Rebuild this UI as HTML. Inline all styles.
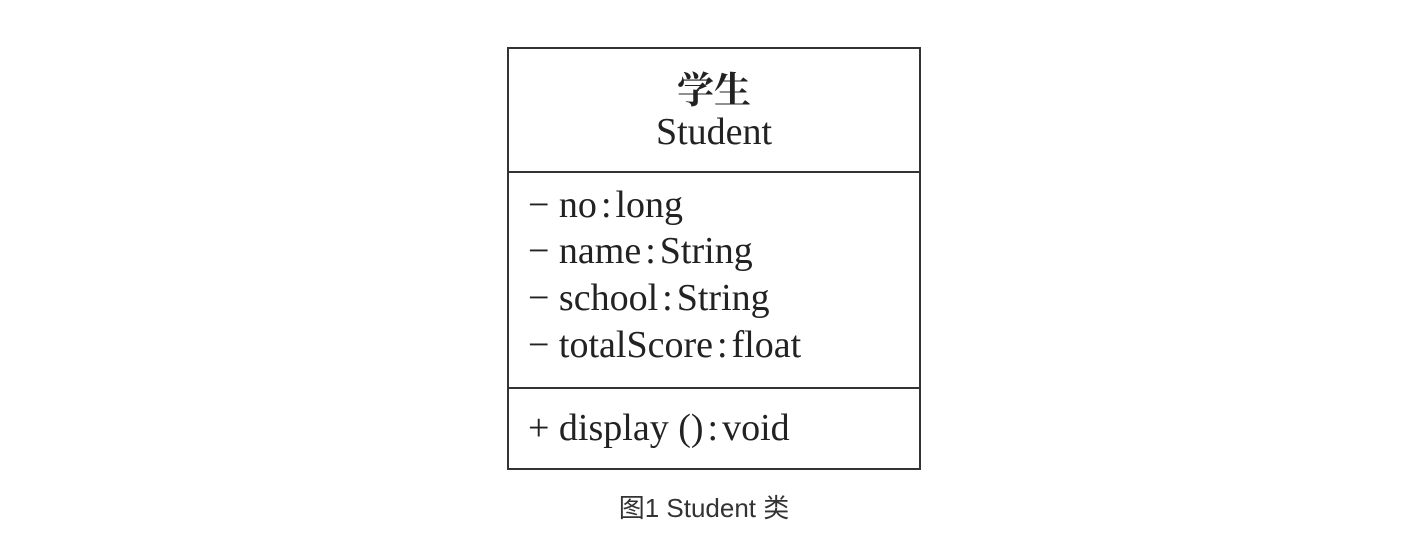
<!DOCTYPE html>
<html><head><meta charset="utf-8"><style>
html,body{margin:0;padding:0;background:#fff;width:1408px;height:550px;overflow:hidden;position:relative}
.box{position:absolute;left:507px;top:47px;width:410px;height:419px;border:2px solid #333;box-sizing:content-box}
.hl{position:absolute;left:507px;width:414px;height:2px;background:#333}
.t{position:absolute;font-family:"Liberation Serif","Noto Serif CJK SC",serif;color:#222;font-size:38px;line-height:40px;white-space:pre}
.c{margin:0 4px}
.cap{position:absolute;left:0;width:1408px;text-align:center;top:492px;font-family:"Liberation Sans","Noto Sans CJK SC",sans-serif;font-size:26px;color:#333;line-height:32px}
</style></head><body>
<div class="box"></div>
<div class="hl" style="top:171px"></div>
<div class="hl" style="top:387px"></div>
<div class="t" style="left:507px;width:414px;text-align:center;top:72px;font-size:37px;font-weight:bold">学生</div>
<div class="t" style="left:507px;width:414px;text-align:center;top:112px">Student</div>
<div class="t" style="left:528px;top:185px">− no<span class="c">:</span>long</div>
<div class="t" style="left:528px;top:231px">− name<span class="c">:</span>String</div>
<div class="t" style="left:528px;top:278px">− school<span class="c">:</span>String</div>
<div class="t" style="left:528px;top:325px">− totalScore<span class="c">:</span>float</div>
<div class="t" style="left:528px;top:408px">+ display ()<span class="c">:</span>void</div>
<div class="cap">图1 Student 类</div>
</body></html>
